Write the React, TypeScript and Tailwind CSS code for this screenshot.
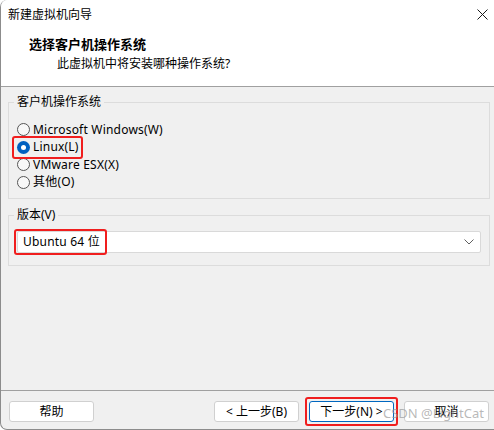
import React from 'react';

const font = { fontFamily: '"Noto Sans", "Noto Sans CJK SC", sans-serif' };

const Radio = ({ checked, label }: { checked?: boolean; label: string }) => (
  <div className="flex items-center h-[17.5px]">
    {checked ? (
      <span className="w-[13px] h-[13px] rounded-full bg-[#0060c0] flex items-center justify-center">
        <span className="w-[5px] h-[5px] rounded-full bg-white" />
      </span>
    ) : (
      <span className="w-[13px] h-[13px] rounded-full border border-[#555] bg-[#f8f8f8]" />
    )}
    <span className="ml-[3px] text-[12px] text-black leading-none tracking-[0.2px]">{label}</span>
  </div>
);

const Button = ({ children, primary }: { children: React.ReactNode; primary?: boolean }) => (
  <button
    className={`w-[85px] h-[21px] rounded-[3px] text-[12px] text-black flex items-center justify-center ${
      primary ? 'bg-white border border-[#0067c0]' : 'bg-white border border-[#d0d0d0]'
    }`}
  >
    {children}
  </button>
);

export default function App() {
  return (
    <div
      className="w-[494px] h-[430px] bg-[#f0f0f0] flex flex-col border-l border-b border-[#8c8c8c] rounded-tl-[7px] rounded-bl-[7px] overflow-hidden relative"
      style={font}
    >
      {/* header */}
      <div className="bg-white h-[87px] border-b border-[#a0a0a0] flex flex-col">
        <div className="h-[30px] flex items-center justify-between pl-[7px] pr-[6px]">
          <span className="text-[12px] text-black">新建虚拟机向导</span>
          <svg width="11" height="11" viewBox="0 0 11 11" className="mb-[2px]">
            <path d="M0.5 0.5 L10.5 10.5 M10.5 0.5 L0.5 10.5" stroke="#1a1a1a" strokeWidth="1" />
          </svg>
        </div>
        <div className="pl-[28px] mt-[6px] text-[13px] font-bold text-black leading-[17px]">选择客户机操作系统</div>
        <div className="pl-[56px] mt-[2px] text-[12px] text-black leading-[17px]">此虚拟机中将安装哪种操作系统?</div>
      </div>

      {/* guest OS group */}
      <fieldset className="mt-[7px] ml-[7px] mr-[4px] border border-[#dcdcdc] px-[8px] pt-[11px] pb-[7px]">
        <legend className="px-[3px] -ml-[3px] text-[12px] text-black leading-[16px]">客户机操作系统</legend>
        <Radio label="Microsoft Windows(W)" />
        <div className="relative">
          <Radio checked label="Linux(L)" />
          <div className="absolute left-[-5px] top-[-3px] w-[71px] h-[23px] border-2 border-[#f01e1e] rounded-[3px]" />
        </div>
        <Radio label="VMware ESX(X)" />
        <Radio label="其他(O)" />
      </fieldset>

      {/* version group */}
      <fieldset className="mt-[8px] ml-[7px] mr-[4px] border border-[#dcdcdc] px-[8px] pt-[8px] pb-[12px]">
        <legend className="px-[3px] -ml-[3px] text-[12px] text-black leading-[16px]">版本(V)</legend>
        <div className="relative">
          <div className="h-[22px] bg-white border border-[#d9d9d9] rounded-[2px] flex items-center justify-between pl-[5px] pr-[6px]">
            <span className="text-[12px] text-black tracking-[0.2px]">Ubuntu 64 位</span>
            <svg width="10" height="6" viewBox="0 0 10 6">
              <path d="M0.5 0.5 L5 5 L9.5 0.5" fill="none" stroke="#606060" strokeWidth="1" />
            </svg>
          </div>
          <div className="absolute left-[-3px] top-[-2px] w-[93px] h-[26px] border-2 border-[#f01e1e] rounded-[3px]" />
        </div>
      </fieldset>

      <div className="flex-1" />

      {/* footer */}
      <div className="h-[39px] border-t border-[#a0a0a0] flex items-start pt-[10px] pl-[8px] pr-[5px]">
        <Button>帮助</Button>
        <div className="flex-1" />
        <Button>&lt; 上一步(B)</Button>
        <div className="ml-[10px] relative">
          <Button primary>下一步(N) &gt;</Button>
          <div className="absolute left-[-4px] top-[-4px] w-[93px] h-[29px] border-2 border-[#f01e1e] rounded-[3px]" />
        </div>
        <div className="ml-[10px]">
          <Button>取消</Button>
        </div>
      </div>

      {/* watermark */}
      <div className="absolute left-[382px] top-[404px] text-[13px] text-[#9a9a9a]/70 pointer-events-none whitespace-nowrap">
        CSDN @LightCat
      </div>
    </div>
  );
}
